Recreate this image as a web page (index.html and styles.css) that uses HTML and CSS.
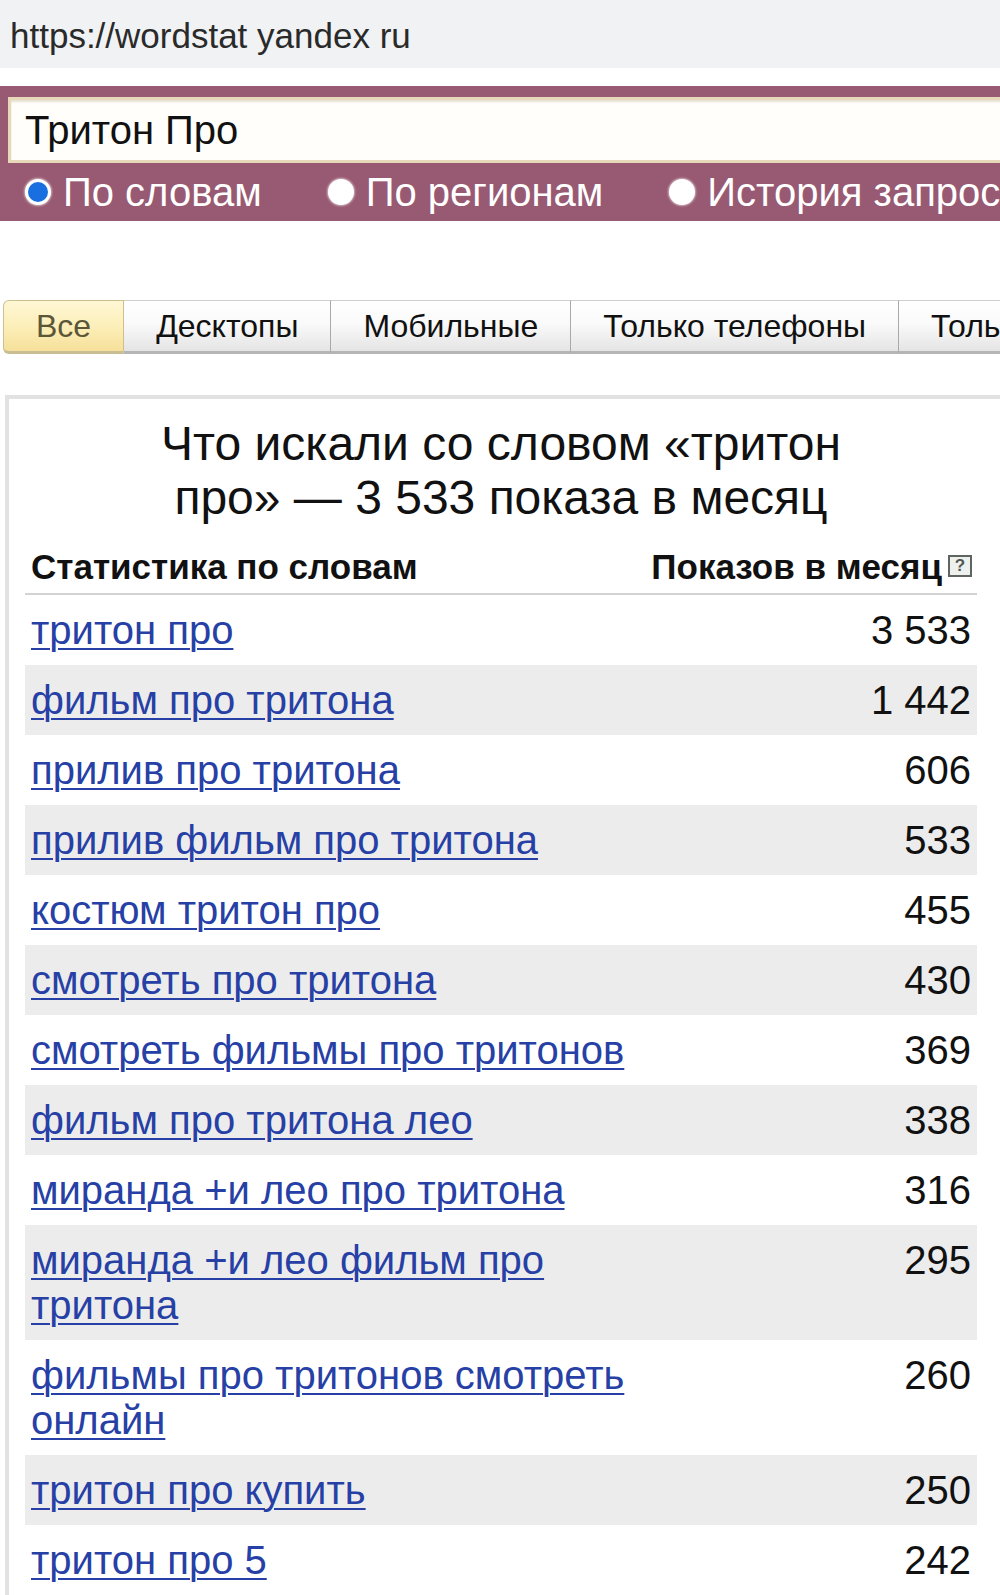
FILE: index.html
```html
<!DOCTYPE html>
<html lang="ru">
<head>
<meta charset="utf-8">
<title>Wordstat</title>
<link rel="stylesheet" href="styles.css">
</head>
<body>
<div class="addr">https://wordstat yandex ru</div>

<div class="band">
  <div class="query">Тритон Про</div>
  <div class="radios">
    <div class="radio-item"><span class="radio checked"></span><span class="radio-label">По словам</span></div>
    <div class="radio-item"><span class="radio"></span><span class="radio-label">По регионам</span></div>
    <div class="radio-item"><span class="radio"></span><span class="radio-label">История запросов</span></div>
  </div>
</div>

<div class="tabs">
  <div class="tab active">Все</div>
  <div class="tab">Десктопы</div>
  <div class="tab">Мобильные</div>
  <div class="tab">Только телефоны</div>
  <div class="tab">Только планшеты</div>
</div>

<div class="panel">
  <div class="report">
    <h1 class="title">Что искали со словом «тритон про» — 3&nbsp;533 показа в месяц</h1>
    <div class="head-row">
      <div class="col-word">Статистика по словам</div>
      <div class="col-num">Показов в месяц<span class="help">?</span></div>
    </div>
    <div class="row"><div class="col-word"><a href="#">тритон про</a></div><div class="col-num">3 533</div></div>
    <div class="row alt"><div class="col-word"><a href="#">фильм про тритона</a></div><div class="col-num">1 442</div></div>
    <div class="row"><div class="col-word"><a href="#">прилив про тритона</a></div><div class="col-num">606</div></div>
    <div class="row alt"><div class="col-word"><a href="#">прилив фильм про тритона</a></div><div class="col-num">533</div></div>
    <div class="row"><div class="col-word"><a href="#">костюм тритон про</a></div><div class="col-num">455</div></div>
    <div class="row alt"><div class="col-word"><a href="#">смотреть про тритона</a></div><div class="col-num">430</div></div>
    <div class="row"><div class="col-word"><a href="#">смотреть фильмы про тритонов</a></div><div class="col-num">369</div></div>
    <div class="row alt"><div class="col-word"><a href="#">фильм про тритона лео</a></div><div class="col-num">338</div></div>
    <div class="row"><div class="col-word"><a href="#">миранда +и лео про тритона</a></div><div class="col-num">316</div></div>
    <div class="row alt"><div class="col-word"><a href="#">миранда +и лео фильм про тритона</a></div><div class="col-num">295</div></div>
    <div class="row"><div class="col-word"><a href="#">фильмы про тритонов смотреть онлайн</a></div><div class="col-num">260</div></div>
    <div class="row alt"><div class="col-word"><a href="#">тритон про купить</a></div><div class="col-num">250</div></div>
    <div class="row"><div class="col-word"><a href="#">тритон про 5</a></div><div class="col-num">242</div></div>
  </div>
</div>
</body>
</html>
```

FILE: styles.css
```css
html, body {
  margin: 0;
  padding: 0;
  overflow: hidden;
  background: #ffffff;
}

body {
  width: 1000px;
  font-family: "Liberation Sans", Arial, sans-serif;
  color: #111;
}

.addr {
  height: 65px;
  padding: 3px 0 0 10px;
  line-height: 65px;
  font-size: 35px;
  color: #2a2a2a;
  background: #f0f2f4;
  white-space: nowrap;
}

.band {
  margin-top: 18px;
  height: 135px;
  background: #985a72;
  padding: 11px 0 0 8px;
  box-sizing: border-box;
  overflow: hidden;
}

.query {
  width: 1100px;
  height: 66px;
  box-sizing: border-box;
  background: #fffefa;
  border: 3px solid #e6d8b8;
  box-shadow: inset 0 2px 2px rgba(120, 90, 40, 0.18);
  padding-left: 14px;
  font-size: 40px;
  line-height: 60px;
  color: #111;
  white-space: nowrap;
}

.radios {
  display: flex;
  gap: 66px;
  padding-left: 17px;
  height: 58px;
  align-items: center;
  white-space: nowrap;
}

.radio-item {
  display: flex;
  align-items: center;
  gap: 12px;
  flex-shrink: 0;
}

.radio {
  width: 26px;
  height: 26px;
  border-radius: 50%;
  box-sizing: border-box;
  background: #ffffff;
  box-shadow: 0 0 2px 1px rgba(255, 255, 255, 0.55);
  flex-shrink: 0;
}

.radio.checked {
  background: #1a6fe0;
  border: 3px solid #ffffff;
}

.radio-label {
  font-size: 40px;
  line-height: 46px;
  color: #ffffff;
}

.tabs {
  display: flex;
  margin: 79px 0 0 3px;
  white-space: nowrap;
}

.tab {
  flex-shrink: 0;
  height: 54px;
  box-sizing: border-box;
  padding: 0 32px;
  font-size: 32px;
  line-height: 50px;
  color: #111;
  background: linear-gradient(#ffffff, #fafafa 45%, #e4e4e4);
  border-top: 1px solid #cfcfcf;
  border-bottom: 3px solid #b5b5b5;
  border-right: 1px solid #a9a9a9;
}

.tab.active {
  color: #5b5638;
  background: linear-gradient(#fff7d6, #fcefb9 50%, #f6e09a);
  border: 1px solid #cdc090;
  border-bottom: 3px solid #c9bd93;
  border-radius: 6px 0 0 6px;
}

.panel {
  margin: 41px 0 0 5px;
  width: 1100px;
  border-top: 4px solid #e2e2e2;
  border-left: 4px solid #e2e2e2;
  padding: 18px 0 0 16px;
}

.report {
  width: 952px;
}

.title {
  max-width: 740px;
  margin: 0 auto;
  font-size: 48px;
  line-height: 54px;
  font-weight: normal;
  text-align: center;
  color: #111;
}

.head-row {
  display: flex;
  padding: 22px 0 6px;
  border-bottom: 2px solid #d3d3d3;
  font-size: 35px;
  line-height: 40px;
  font-weight: bold;
  color: #111;
}

.head-row .col-word {
  flex: 1;
  padding-left: 6px;
}

.head-row .col-num {
  padding-right: 5px;
  display: flex;
  align-items: flex-start;
}

.help {
  display: inline-block;
  width: 24px;
  height: 22px;
  box-sizing: border-box;
  margin: 8px 0 0 6px;
  border: 2px solid #5e6460;
  background: #eef0ee;
  font-size: 17px;
  line-height: 18px;
  text-align: center;
  color: #4e5a52;
  font-weight: bold;
}

.row {
  display: flex;
  font-size: 40px;
  line-height: 45px;
}

.row.alt {
  background: #ececec;
}

.row .col-word {
  width: 610px;
  padding: 12.5px 6px;
  flex-shrink: 0;
}

.row .col-num {
  flex: 1;
  padding: 12.5px 6px 12.5px 0;
  text-align: right;
  color: #111;
}

.row a {
  color: #2640a6;
  text-decoration: underline;
  text-decoration-thickness: 2px;
  text-underline-offset: 4px;
}
```
